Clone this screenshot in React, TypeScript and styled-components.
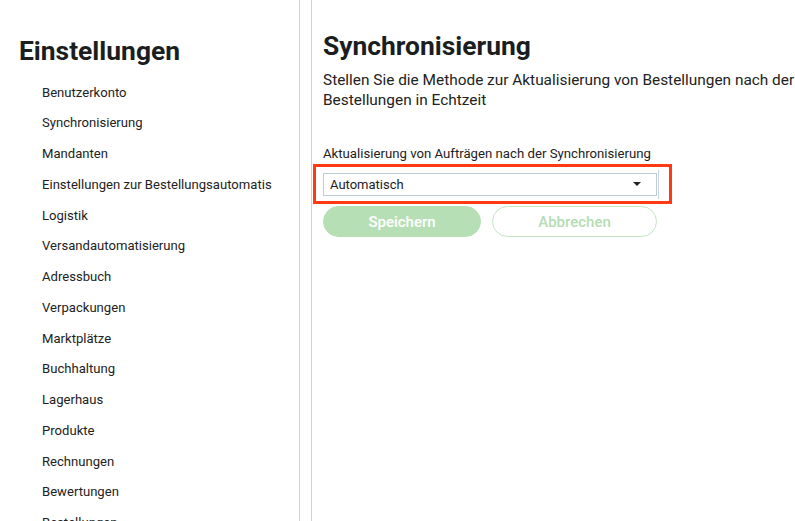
import styled, { createGlobalStyle } from "styled-components";

const GlobalStyle = createGlobalStyle`
html, body {
    margin: 0;
    padding: 0;
    overflow: hidden;
    background: #ffffff;
}
body {
    font-family: Roboto, "Liberation Sans", Arial, sans-serif;
    color: #212529;
}
`

const Page = styled.div`
display: flex;
width: 795px;
height: 521px;
overflow: hidden;
`

const Sidebar = styled.aside`
flex: 0 0 300px;
border-right: 1px solid #c9d4da;
padding: 35px 0 0 19px;
box-sizing: border-box;
overflow: hidden;
`

const Gutter = styled.div`
flex: 0 0 11px;
`

const Main = styled.main`
flex: 0 0 auto;
width: 620px;
border-left: 1px solid #c9d4da;
padding: 30px 0 0 11px;
box-sizing: border-box;
`

const Heading = styled.h1`
margin: 0;
font-size: 26.4px;
line-height: 32px;
font-weight: 700;
color: #1b1e21;
white-space: nowrap;
`

const Menu = styled.ul`
list-style: none;
margin: 10.5px 0 0;
padding: 0 0 0 23px;
`

const MenuItem = styled.li`
font-size: 13.1px;
line-height: 30.77px;
color: #222;
white-space: nowrap;
`

const Description = styled.p`
margin: 8px 0 0;
font-size: 15.4px;
line-height: 20px;
color: #222;
width: 490px;
`

const Label = styled.div`
margin-top: 36px;
font-size: 13.2px;
line-height: 16px;
color: #222;
white-space: nowrap;
`

const Highlight = styled.div`
display: flex;
align-items: center;
width: 359px;
height: 40px;
box-sizing: border-box;
margin: 2px 0 0 -10px;
padding: 0 0 0 7px;
border: 3px solid #ff3a12;
`

const Select = styled.div`
display: flex;
align-items: center;
justify-content: space-between;
width: 334px;
height: 23px;
box-sizing: border-box;
border: 1px solid #b9ced8;
padding: 0 15px 0 6px;
font-size: 13px;
color: #222;
`

const Caret = styled.span`
width: 0;
height: 0;
border-left: 4px solid transparent;
border-right: 4px solid transparent;
border-top: 4px solid #222;
`

const Divider = styled.div`
width: 1px;
height: 29px;
margin-left: 1px;
background: #c9d4da;
`

const Actions = styled.div`
display: flex;
gap: 11px;
margin-top: 2px;
`

const Button = styled.button<{ $primary?: boolean }>`
height: 31px;
width: ${p => (p.$primary ? "158px" : "165px")};
border-radius: 16px;
font-family: inherit;
font-size: 15px;
font-weight: 500;
cursor: pointer;
background: ${p => (p.$primary ? "#b7dfb6" : "#ffffff")};
color: ${p => (p.$primary ? "#ffffff" : "#b5dcb3")};
border: 1px solid ${p => (p.$primary ? "#b7dfb6" : "#c3e5c2")};
`

const items = [
    "Benutzerkonto",
    "Synchronisierung",
    "Mandanten",
    "Einstellungen zur Bestellungsautomatis",
    "Logistik",
    "Versandautomatisierung",
    "Adressbuch",
    "Verpackungen",
    "Marktplätze",
    "Buchhaltung",
    "Lagerhaus",
    "Produkte",
    "Rechnungen",
    "Bewertungen",
    "Bestellungen",
];

const App = () => {
    return (
        <Page>
            <GlobalStyle />
            <Sidebar>
                <Heading>Einstellungen</Heading>
                <Menu>
                    {items.map(item => (
                        <MenuItem key={item}>{item}</MenuItem>
                    ))}
                </Menu>
            </Sidebar>
            <Gutter />
            <Main>
                <Heading>Synchronisierung</Heading>
                <Description>
                    Stellen Sie die Methode zur Aktualisierung von Bestellungen nach der Bestellungen in Echtzeit
                </Description>
                <Label>Aktualisierung von Aufträgen nach der Synchronisierung</Label>
                <Highlight>
                    <Select>
                        <span>Automatisch</span>
                        <Caret />
                    </Select>
                    <Divider />
                </Highlight>
                <Actions>
                    <Button $primary>Speichern</Button>
                    <Button>Abbrechen</Button>
                </Actions>
            </Main>
        </Page>
    )
}

export default App;
